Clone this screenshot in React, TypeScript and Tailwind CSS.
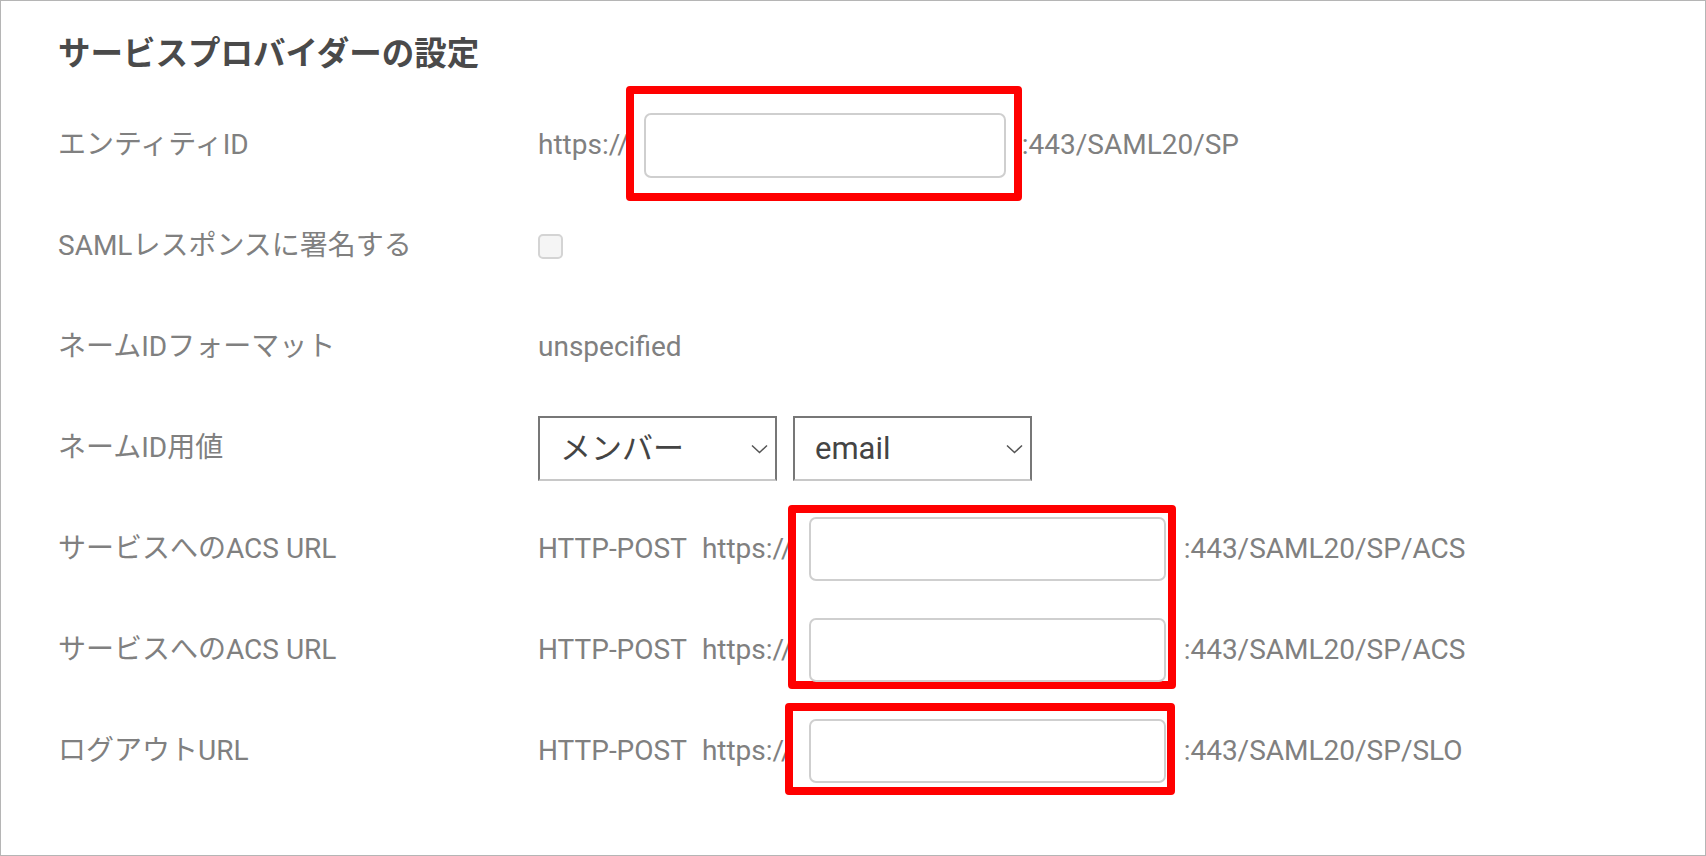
import { ReactNode } from "react";

function Row({ label, children }: { label: string; children: ReactNode }) {
  return (
    <div className="flex h-[101px] items-center">
      <div className="w-[480px] shrink-0">{label}</div>
      <div className="flex items-center">{children}</div>
    </div>
  );
}

function Select({ value, options }: { value: string; options: string[] }) {
  return (
    <div className="relative">
      <select
        defaultValue={value}
        className="h-[65px] w-[239px] appearance-none rounded-none border-2 border-[#777] border-b-[#c8c8c8] bg-white pl-[20px] font-[inherit] text-[31px] text-[#444] outline-none"
      >
        {options.map((o) => (
          <option key={o}>{o}</option>
        ))}
      </select>
      <svg
        width="17"
        height="10"
        viewBox="0 0 17 10"
        fill="none"
        className="pointer-events-none absolute top-[28px] right-[9px]"
      >
        <path d="M1 1.5l7.5 7 7.5-7" stroke="#555" strokeWidth="1.5" />
      </svg>
    </div>
  );
}

function UrlInput({ wide, frame }: { wide?: boolean; frame?: string }) {
  return (
    <span className="relative block">
      <input
        type="text"
        className={
          wide
            ? "block h-[65px] w-[362px] rounded-[7px] border-2 border-[#cfcfcf] bg-white outline-none"
            : "block h-[64px] w-[357px] rounded-[7px] border-2 border-[#cfcfcf] bg-white outline-none"
        }
      />
      {/* red annotation frame */}
      {frame && <span className={`pointer-events-none absolute rounded-[4px] border-8 border-[#ff0000] ${frame}`} />}
    </span>
  );
}

export default function App() {
  return (
    <div className="relative h-[856px] w-full overflow-hidden border border-[#b5b5b5] bg-white pt-[37px] pl-[57px] font-['Roboto','Noto_Sans_CJK_JP',sans-serif] text-[28px] leading-none text-[#808080]">
      <h1 className="text-[32.5px] font-bold leading-none text-[#4a4a4a]">サービスプロバイダーの設定</h1>

      <div className="mt-[24px]">
        <Row label="エンティティID">
          <span>https://</span>
          <span className="ml-[15px]">
            <UrlInput wide frame="top-[-27px] right-[-16px] bottom-[-23px] left-[-18px]" />
          </span>
          <span className="ml-[16px]">:443/SAML20/SP</span>
        </Row>

        <Row label="SAMLレスポンスに署名する">
          <input
            type="checkbox"
            className="h-[25px] w-[25px] appearance-none rounded-[5px] border-2 border-[#d4d4d4] bg-[#f5f5f5]"
          />
        </Row>

        <Row label="ネームIDフォーマット">
          <span>unspecified</span>
        </Row>

        <Row label="ネームID用値">
          <div className="flex gap-[16px]">
            <Select value="メンバー" options={["メンバー", "グループ"]} />
            <Select value="email" options={["email", "name", "id"]} />
          </div>
        </Row>

        <Row label="サービスへのACS URL">
          <span>HTTP-POST</span>
          <span className="ml-[15px]">https://</span>
          <span className="ml-[16px]">
            <UrlInput frame="top-[-12px] right-[-10px] bottom-[-108px] left-[-21px]" />
          </span>
          <span className="ml-[18px]">:443/SAML20/SP/ACS</span>
        </Row>

        <Row label="サービスへのACS URL">
          <span>HTTP-POST</span>
          <span className="ml-[15px]">https://</span>
          <span className="ml-[16px]">
            <UrlInput />
          </span>
          <span className="ml-[18px]">:443/SAML20/SP/ACS</span>
        </Row>

        <Row label="ログアウトURL">
          <span>HTTP-POST</span>
          <span className="ml-[15px]">https://</span>
          <span className="ml-[16px]">
            <UrlInput frame="top-[-16px] right-[-9px] bottom-[-12px] left-[-24px]" />
          </span>
          <span className="ml-[18px]">:443/SAML20/SP/SLO</span>
        </Row>
      </div>
    </div>
  );
}
